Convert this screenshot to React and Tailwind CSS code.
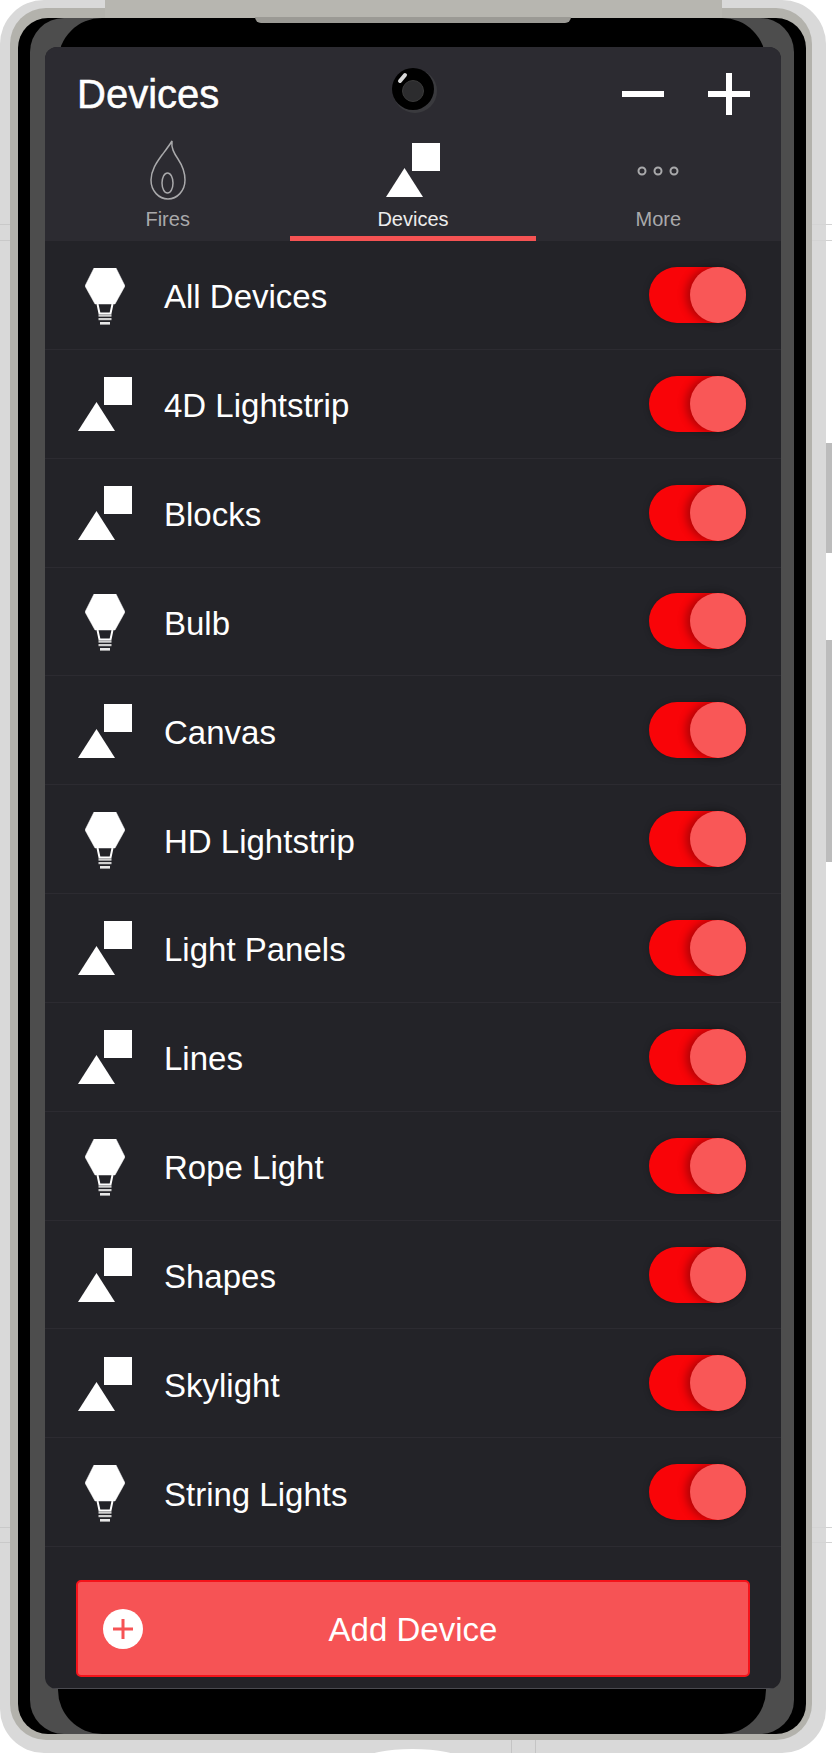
import React from "react";

const devices = [
  { name: "All Devices", icon: "bulb" },
  { name: "4D Lightstrip", icon: "shapes" },
  { name: "Blocks", icon: "shapes" },
  { name: "Bulb", icon: "bulb" },
  { name: "Canvas", icon: "shapes" },
  { name: "HD Lightstrip", icon: "bulb" },
  { name: "Light Panels", icon: "shapes" },
  { name: "Lines", icon: "shapes" },
  { name: "Rope Light", icon: "bulb" },
  { name: "Shapes", icon: "shapes" },
  { name: "Skylight", icon: "shapes" },
  { name: "String Lights", icon: "bulb" },
];

const ShapesIcon = () => (
  <svg width="54" height="54" viewBox="0 0 54 54" fill="#fff">
    <rect x="26" y="0" width="28" height="28" />
    <path d="M18.5 25 L37 54 L0 54 Z" />
  </svg>
);

const BulbIcon = () => (
  <svg width="40" height="57" viewBox="0 0 40 57" fill="#fff">
    <path d="M9 0 H31 L40 18 L30 36 H10 L0 18 Z" stroke="#fff" strokeWidth="0.5" strokeLinejoin="round" />
    <path d="M12.5 36 L14.5 45.5 H25.5 L27.5 36" fill="none" stroke="#fff" strokeWidth="2" />
    <rect x="13.5" y="46.5" width="13" height="2.2" fill="#cfcfcf" />
    <rect x="13.5" y="50" width="13" height="2.2" fill="#cfcfcf" />
    <rect x="15" y="54" width="10" height="2.6" fill="#e8e8e8" />
  </svg>
);

const FlameIcon = () => (
  <svg width="36" height="60" viewBox="0 0 36 60" fill="none" stroke="#a9a9ab" strokeWidth="1.5">
    <path d="M22 1 C21 8 24 13 28 19 C32 25 35 32 35 40 C35 51 27 59 18 59 C9 59 1 51 1 40 C1 30 7 22 12 15 C15 11 19 6 22 1 Z" />
    <ellipse cx="17.5" cy="43" rx="5.5" ry="10" />
  </svg>
);

const DotsIcon = () => (
  <svg className="mt-[2px]" width="42" height="10" viewBox="0 0 42 10" fill="none" stroke="#a9a9ab" strokeWidth="2">
    <circle cx="5" cy="5" r="3.5" />
    <circle cx="21" cy="5" r="3.5" />
    <circle cx="37" cy="5" r="3.5" />
  </svg>
);

const Camera = () => (
  <svg width="50" height="50" viewBox="0 0 50 50">
    <circle cx="26" cy="26" r="22" fill="#3a3a3e" />
    <circle cx="24" cy="24" r="21" fill="#000" />
    <circle cx="24" cy="26" r="10.5" fill="#2c2c2e" stroke="#3a3a3a" strokeWidth="1" />
    <path d="M11 16 L16 10" stroke="#d8d8d8" strokeWidth="4" strokeLinecap="round" />
  </svg>
);

const Toggle = () => (
  <div className="relative h-14 w-[97px] rounded-full bg-[#f90408] shadow-[0_0_6px_rgba(0,0,0,0.25)]">
    <div className="absolute right-0 top-0 h-14 w-14 rounded-full bg-[#f95757] shadow-[-4px_0_8px_rgba(0,0,0,0.3)]"></div>
  </div>
);

const DeviceRow = ({ device }) => (
  <div className="flex h-[108.85px] items-center border-b border-[#2c2b31] pl-[33px] pr-[35px]">
    <div className="flex w-[54px] justify-center">
      {device.icon === "bulb" ? (
        <div className="mt-[3px]"><BulbIcon /></div>
      ) : (
        <div className="mt-[1px]"><ShapesIcon /></div>
      )}
    </div>
    <span className="ml-[32px] mt-[4px] flex-1 text-[33px] leading-none text-white">{device.name}</span>
    <Toggle />
  </div>
);

const Tab = ({ label, active, children }) => (
  <div className={`flex h-[124px] w-1/3 flex-col items-center justify-end border-b-[5px] pb-[5px] ${active ? "border-[#f55353]" : "border-transparent"}`}>
    <div className="flex h-[62px] items-center">{children}</div>
    <span className={`mt-[6px] text-[20px] leading-[24px] ${active ? "text-[#ececec]" : "text-[#a9a9ab]"}`}>{label}</span>
  </div>
);

export default function App() {
  return (
    <div className="relative h-[1753px] w-[832px] overflow-hidden bg-white font-['Liberation_Sans',Arial,sans-serif]">
      {/* side buttons */}
      <div className="absolute right-0 top-[443px] h-[110px] w-[6px] bg-[#bcbcbc]"></div>
      <div className="absolute right-0 top-[640px] h-[222px] w-[6px] bg-[#bcbcbc]"></div>

      {/* phone body */}
      <div className="relative h-[1753px] w-[826px] rounded-[44px] bg-[#d9d9d9] pb-[13px] pl-[10px] pr-[14px] pt-[8px]">
        <div className="h-full rounded-[36px] bg-[#b3b2ac] pb-[6px] pl-[8px] pr-[6px] pt-[10px]">
          <div className="h-full rounded-[30px] bg-black px-[12px]">
            <div className="relative h-full rounded-[34px] bg-[#4d4d4d] pl-[15px] pr-[13px] pt-[29px]">
              <div className="absolute inset-y-0 left-[28px] right-[28px] rounded-[44px] bg-black"></div>

              {/* screen */}
              <div className="relative flex h-[1642px] flex-col overflow-hidden rounded-[12px] bg-[#232328]">
                <div className="bg-[#2c2b31]">
                  <div className="flex h-[70px] items-center justify-between pl-[32px] pr-[31px] pt-[24px]">
                    <span className="text-[40px] leading-none text-white [-webkit-text-stroke:0.5px_white]">Devices</span>
                    <div className="flex items-center gap-[44px]">
                      <svg width="42" height="42" viewBox="0 0 42 42" fill="#fff">
                        <rect x="0" y="18" width="42" height="6" />
                      </svg>
                      <svg width="42" height="42" viewBox="0 0 42 42" fill="#fff">
                        <rect x="0" y="18" width="42" height="6" />
                        <rect x="18" y="0" width="6" height="42" />
                      </svg>
                    </div>
                  </div>
                  <div className="flex">
                    <Tab label="Fires"><FlameIcon /></Tab>
                    <Tab label="Devices" active><ShapesIcon /></Tab>
                    <Tab label="More"><DotsIcon /></Tab>
                  </div>
                </div>

                <div>
                  {devices.map((device) => (
                    <DeviceRow key={device.name} device={device} />
                  ))}
                </div>

                <div className="flex flex-1 items-start justify-center px-[31px] pt-[33px]">
                  <button className="relative flex h-[97px] w-full items-center justify-center rounded-[5px] border-2 border-[#f5141b] bg-[#f65355] pt-[3px] text-[33px] text-white">
                    <span className="absolute left-[25px] top-[27px] flex h-10 w-10 items-center justify-center rounded-full bg-white">
                      <svg width="20" height="20" viewBox="0 0 20 20" fill="#f65355">
                        <rect x="0" y="8.5" width="20" height="3" />
                        <rect x="8.5" y="0" width="3" height="20" />
                      </svg>
                    </span>
                    Add Device
                  </button>
                </div>
                <div className="h-[1px] bg-[#4a4a50]"></div>
              </div>
            </div>
          </div>
        </div>
      </div>

      <div className="absolute left-0 top-[224px] h-[17px] w-[10px] border-y border-[#c9c9c9]"></div>
      <div className="absolute left-0 top-[1527px] h-[16px] w-[10px] border-y border-[#c9c9c9]"></div>
      <div className="absolute right-0 top-[224px] h-[17px] w-[20px] border-y border-[#d4d4d4]"></div>
      <div className="absolute right-0 top-[1527px] h-[16px] w-[20px] border-y border-[#d4d4d4]"></div>
      <div className="absolute bottom-0 left-[511px] h-[13px] w-[25px] border-x border-[#c4c4c4]"></div>
      <div className="absolute left-[365px] top-[1749px] h-[20px] w-[95px] rounded-[50%] bg-white"></div>

      {/* top bar of the frame and camera */}
      <div className="absolute left-[105px] top-0 h-[18px] w-[617px] bg-[#b7b6b0]"></div>
      <div className="absolute left-[255px] top-[17px] h-[6px] w-[316px] rounded-b-[6px] bg-[#9b9a95]"></div>
      <div className="absolute left-[389px] top-[65px]">
        <Camera />
      </div>
    </div>
  );
}
